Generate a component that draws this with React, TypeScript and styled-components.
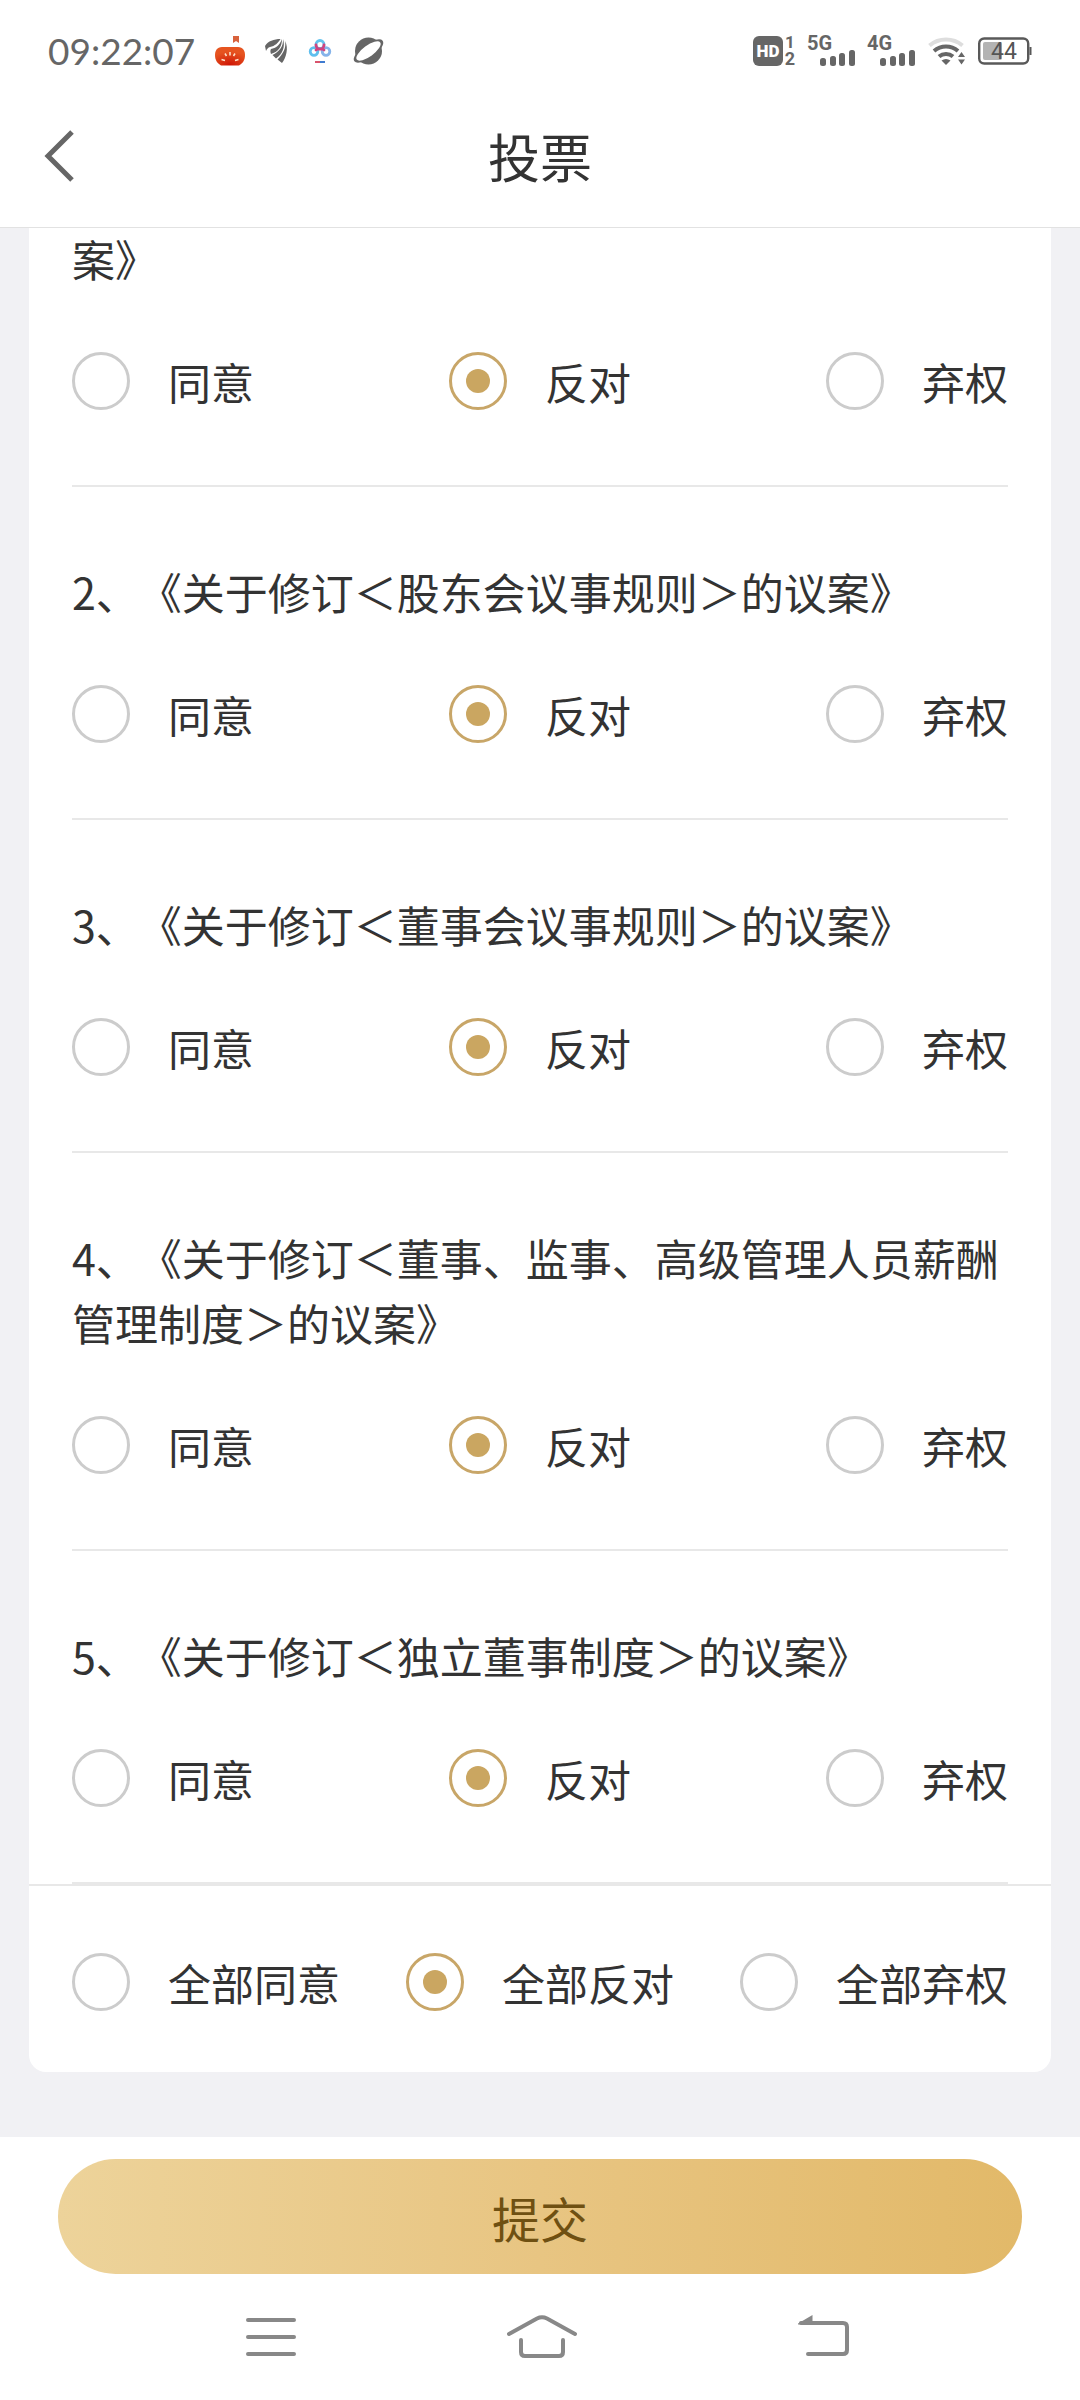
import React, { useState } from 'react';
import styled, { createGlobalStyle } from 'styled-components';

const GlobalStyle = createGlobalStyle`
  * { box-sizing: border-box; }
  body {
    margin: 0;
    background: #f1f1f4;
    color: #333;
    font-family: "Noto Sans CJK SC", "Noto Sans", sans-serif;
    text-spacing-trim: space-all;
  }
`;

const Page = styled.div`
  min-height: 100vh;
  display: flex;
  flex-direction: column;
`;

const StatusBar = styled.div`
  height: 84px;
  padding: 18px 48px 0;
  display: flex;
  align-items: center;
  justify-content: space-between;
  background: #fff;
  color: #666;
`;

const StatusGroup = styled.div<{ $gap: number }>`
  display: flex;
  align-items: center;
  gap: ${(p) => p.$gap}px;
`;

const Clock = styled.time`
  font-family: Lato, sans-serif;
  font-size: 37px;
  line-height: 44px;
`;

const Glyph = styled.svg`
  display: block;
  flex: none;
  overflow: visible;
`;

const Header = styled.header`
  position: relative;
  z-index: 1;
  height: 144px;
  padding: 0 36px;
  display: grid;
  grid-template-columns: 48px 1fr 48px;
  align-items: center;
  background: #fff;
  border-bottom: 1px solid #e2e2e2;
`;

const IconButton = styled.button`
  padding: 0;
  border: 0;
  background: none;
  display: flex;
  justify-content: center;
  color: #666;
  cursor: pointer;
`;

const Title = styled.h1`
  margin: 0;
  font-size: 52px;
  font-weight: 400;
  line-height: 76px;
  text-align: center;
`;

const Content = styled.main`
  flex: 1;
  padding: 0 29px 65px;
`;

const Card = styled.form`
  background: #fff;
  border-radius: 0 0 17px 17px;
`;

const Motion = styled.fieldset`
  margin: 0 43px;
  padding: 72px 0 75px;
  border: 0;
  border-bottom: 2px solid #e8e8e8;
  min-width: 0;

  &:first-child {
    margin-top: -2px;
    padding-top: 0;
  }
`;

const MotionTitle = styled.legend`
  padding: 0;
  margin-bottom: 61px;
  float: left;
  width: 100%;
  font-size: 43px;
  line-height: 65px;
`;

const Options = styled.div`
  clear: both;
  display: flex;
  justify-content: space-between;
`;

const AllMotions = styled.div`
  padding: 67px 43px 61px;
  border-top: 2px solid #e8e8e8;
`;

const Option = styled.label`
  height: 58px;
  display: flex;
  align-items: center;
  gap: 38px;
  font-size: 43px;
  line-height: 58px;
  cursor: pointer;
`;

const Radio = styled.input`
  appearance: none;
  width: 58px;
  height: 58px;
  margin: 0;
  border: 3px solid #ccc;
  border-radius: 50%;
  display: grid;
  place-items: center;
  cursor: pointer;

  &:checked { border-color: #c8a668; }

  &:checked::before {
    content: "";
    width: 24px;
    height: 24px;
    border-radius: 50%;
    background: #caa661;
  }
`;

const SubmitBar = styled.div`
  padding: 22px 58px 0;
  background: #fff;
`;

const SubmitButton = styled.button`
  display: block;
  width: 100%;
  height: 115px;
  padding: 0;
  border: 0;
  border-radius: 58px;
  background: linear-gradient(90deg, #edd39a, #e8c582 50%, #e2b969);
  color: #6f5012;
  font-family: inherit;
  font-size: 48px;
  line-height: 72px;
  cursor: pointer;
`;

const SystemNav = styled.nav`
  height: 126px;
  padding: 0 231px 0 246px;
  display: flex;
  align-items: center;
  justify-content: space-between;
  background: #fff;
`;

type Choice = 'agree' | 'against' | 'abstain';

const choices: { value: Choice; label: string }[] = [
  { value: 'agree', label: '同意' },
  { value: 'against', label: '反对' },
  { value: 'abstain', label: '弃权' },
];

const motions = [
  '案》',
  '2、《关于修订＜股东会议事规则＞的议案》',
  '3、《关于修订＜董事会议事规则＞的议案》',
  '4、《关于修订＜董事、监事、高级管理人员薪酬管理制度＞的议案》',
  '5、《关于修订＜独立董事制度＞的议案》',
];

function ChoiceRow({ name, prefix = '', value, onChange }: {
  name: string;
  prefix?: string;
  value: Choice | null;
  onChange: (choice: Choice) => void;
}) {
  return (
    <Options>
      {choices.map((c) => (
        <Option key={c.value}>
          <Radio type="radio" name={name} checked={value === c.value} onChange={() => onChange(c.value)} />
          {prefix + c.label}
        </Option>
      ))}
    </Options>
  );
}

function PumpkinIcon() {
  return (
    <Glyph width="32" height="32" viewBox="0 0 32 32" aria-hidden="true">
      <defs>
        <radialGradient id="pumpkin" cx="50%" cy="95%" r="70%">
          <stop offset="0" stopColor="#cf1505" />
          <stop offset="1" stopColor="#e65420" />
        </radialGradient>
      </defs>
      <path d="M19 1h6v7l-3-2-3 2z" fill="#d8623c" />
      <path d="M8 12h16c5 0 7 4 7 8 0 5-2 8-6 10.500H7c-4-2.500-6-5.500-6-10.500 0-4 2-8 7-8z" fill="url(#pumpkin)" />
      <path d="M16 17v3.500M11 18.500l1.500 2.500M21 18.500L19.500 21M7.500 24.500l3.500 1M24.500 24.500l-3.500 1" stroke="#fde6cf" strokeWidth="1.500" fill="none" />
    </Glyph>
  );
}

function WingIcon() {
  return (
    <Glyph width="22" height="26" viewBox="0 0 22 26" fill="#666" aria-hidden="true">
      <path d="M0 8C3 3 9 1 15.500 1 13 5 10 8 5 9 3 9.500 2 11 1 13z" />
      <path d="M17 1C14 8 11 10 6 11c-.8 1-.8 3 0 5C13 14 17 9 17 1z" />
      <path d="M18 1c.5 8-4 12.500-10.500 16l3.500 3.500C17.500 16 20.500 9 18 1z" />
      <path d="M20 3c1.500 7-2 13-7.500 18.500L17 25C21 20 24 10 20 3z" />
    </Glyph>
  );
}

function CloudIcon() {
  return (
    <Glyph width="28" height="26" viewBox="-1 0 28 26" fill="none" strokeWidth="2.800" strokeLinecap="round" aria-hidden="true">
      <circle cx="7" cy="13.500" r="3.800" stroke="#5fbfee" />
      <circle cx="19" cy="13.500" r="3.800" stroke="#86b4ea" />
      <circle cx="13" cy="6.500" r="4" stroke="#62c3ee" />
      <path d="M9 7a4 4 0 0 0 8 0M10.500 10.500L9 12M15.500 10.500L17 12" stroke="#cf4480" />
      <path d="M8 24h5" stroke="#d9536c" strokeWidth="2" strokeLinecap="butt" />
      <path d="M13 24h5" stroke="#3f7bd0" strokeWidth="2" strokeLinecap="butt" />
    </Glyph>
  );
}

function PlanetIcon() {
  return (
    <Glyph width="31" height="28" viewBox="0 0 31 28" aria-hidden="true">
      <circle cx="15.500" cy="14" r="13.500" fill="#666" />
      <ellipse cx="15.500" cy="14" rx="17.500" ry="7" transform="rotate(-36 15.500 14)" fill="#666" />
      <ellipse cx="15.500" cy="14" rx="14.500" ry="5.500" transform="rotate(-36 15.500 14)" fill="#fff" />
    </Glyph>
  );
}

function HdIcon() {
  return (
    <Glyph width="44" height="40" viewBox="0 -4 44 40" fill="#666" fontFamily="Roboto, sans-serif" fontWeight="700" aria-hidden="true">
      <rect x="1" y="1" width="30" height="30" rx="6" />
      <text x="16" y="22" fontSize="17" fontWeight="900" fill="#fff" textAnchor="middle">HD</text>
      <text x="38" y="13" fontSize="17" textAnchor="middle">1</text>
      <text x="38" y="30" fontSize="18" textAnchor="middle">2</text>
    </Glyph>
  );
}

function SignalIcon({ label }: { label: string }) {
  return (
    <Glyph width="48" height="40" viewBox="0 -4 48 40" fill="#666" fontFamily="Roboto, sans-serif" fontWeight="700" aria-hidden="true">
      <text x="-1" y="15" fontSize="20">{label}</text>
      <rect x="12" y="23" width="6" height="8" rx="2.500" />
      <rect x="22" y="21" width="6" height="10" rx="2.500" />
      <rect x="31" y="18" width="6" height="13" rx="2.500" />
      <rect x="41" y="15" width="6" height="16" rx="2.500" />
    </Glyph>
  );
}

function WifiIcon() {
  return (
    <Glyph width="38" height="28" viewBox="0 0 38 28" fill="none" strokeWidth="4" aria-hidden="true">
      <path d="M1.500 8.500C11 .5 25 .5 34.500 8.500" stroke="#ddd" />
      <path d="M6 14c7-6 17-6 24 0M11 19.500c4-3.500 10-3.500 14 0" stroke="#666" />
      <path d="M13.500 23.500c3-2 6-2 9 0L18 28z" fill="#666" />
      <path d="M30 20h7l-3.500-5zM30 22.500h7L33.500 27.500z" fill="#666" />
    </Glyph>
  );
}

function BatteryIcon() {
  return (
    <Glyph width="54" height="28" viewBox="0 0 54 28" aria-hidden="true">
      <rect x="1.200" y="1.500" width="49" height="25" rx="5" fill="#fff" stroke="#595959" strokeWidth="2.400" />
      <rect x="5" y="5" width="19" height="18" rx="2" fill="#b3b3b3" />
      <path d="M52.500 10v8" stroke="#595959" strokeWidth="2" />
      <text x="26" y="22" fontSize="23" fontFamily="Roboto, sans-serif" textAnchor="middle" fill="#555">44</text>
    </Glyph>
  );
}

export default function App() {
  const [votes, setVotes] = useState<Choice[]>(motions.map(() => 'against'));
  const all = votes.every((v) => v === votes[0]) ? votes[0] : null;

  return (
    <>
      <GlobalStyle />
      <Page>
        <StatusBar>
          <StatusGroup $gap={19}>
            <Clock>09:22:07</Clock>
            <PumpkinIcon />
            <WingIcon />
            <CloudIcon />
            <PlanetIcon />
          </StatusGroup>
          <StatusGroup $gap={12}>
            <HdIcon />
            <SignalIcon label="5G" />
            <SignalIcon label="4G" />
            <WifiIcon />
            <BatteryIcon />
          </StatusGroup>
        </StatusBar>

        <Header>
          <IconButton type="button" aria-label="返回">
            <Glyph width="30" height="52" viewBox="0 0 30 52" fill="none" stroke="currentColor" strokeWidth="5">
              <path d="M27 2L3 26l24 24" />
            </Glyph>
          </IconButton>
          <Title>投票</Title>
        </Header>

        <Content>
          <Card id="ballot" onSubmit={(e) => e.preventDefault()}>
            {motions.map((title, i) => (
              <Motion key={title}>
                <MotionTitle>{title}</MotionTitle>
                <ChoiceRow
                  name={`motion-${i + 1}`}
                  value={votes[i]}
                  onChange={(c) => setVotes(votes.map((v, j) => (j === i ? c : v)))}
                />
              </Motion>
            ))}
            <AllMotions>
              <ChoiceRow name="all" prefix="全部" value={all} onChange={(c) => setVotes(motions.map(() => c))} />
            </AllMotions>
          </Card>
        </Content>

        <SubmitBar>
          <SubmitButton type="submit" form="ballot">提交</SubmitButton>
        </SubmitBar>

        <SystemNav>
          <IconButton type="button" aria-label="最近任务">
            <Glyph width="50" height="44" viewBox="0 0 50 44" stroke="#888" strokeWidth="4" strokeLinecap="round">
              <path d="M2 5h46M2 22h46M2 39h46" />
            </Glyph>
          </IconButton>
          <IconButton type="button" aria-label="主屏幕">
            <Glyph width="70" height="44" viewBox="0 0 70 44" fill="none" stroke="#888" strokeWidth="4" strokeLinecap="round">
              <path d="M2 19L30 3.500q5-2.500 10 0L68 19" />
              <path d="M14 25v12q0 4 4 4h34q4 0 4-4V25" />
            </Glyph>
          </IconButton>
          <IconButton type="button" aria-label="返回上一页">
            <Glyph width="62" height="44" viewBox="0 0 62 44" fill="none" stroke="#888" strokeWidth="4" strokeLinecap="round">
              <path d="M14 8h42q4 0 4 4v23q0 4-4 4H21" />
              <path d="M11 9.500v-1L25.500 0v9.500z" fill="#888" stroke="none" />
            </Glyph>
          </IconButton>
        </SystemNav>
      </Page>
    </>
  );
}
